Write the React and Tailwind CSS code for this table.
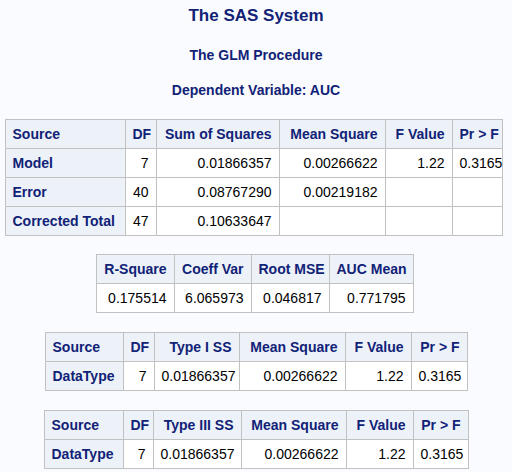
const HEAD = 'border border-[#c1c1c1] bg-[#edf2f9] text-[#112277] font-bold px-[7px] py-[6px] leading-[16px] whitespace-nowrap'
const CELL = 'border border-[#c1c1c1] bg-white text-black px-[7px] py-[6px] leading-[16px] whitespace-nowrap text-right'

function SasTable({ cols, head, rows, rowHeader = true, className = '' }) {
  const total = cols.reduce((s, c) => s + c, 0)
  return (
    <div className={`flex justify-center ${className}`}>
      <table className="table-fixed border-collapse text-[14px]" style={{ width: total }}>
        <colgroup>
          {cols.map((w, i) => <col key={i} style={{ width: w }} />)}
        </colgroup>
        <thead>
          <tr>
            {head.map((h, i) => (
              <th key={h} scope="col" className={`${HEAD} ${rowHeader && i === 0 ? 'text-left' : 'text-right'}`}>{h}</th>
            ))}
          </tr>
        </thead>
        <tbody>
          {rows.map((r) => (
            <tr key={r[0]}>
              {r.map((v, i) =>
                rowHeader && i === 0
                  ? <th key={i} scope="row" className={`${HEAD} text-left`}>{v}</th>
                  : <td key={i} className={CELL}>{v}</td>
              )}
            </tr>
          ))}
        </tbody>
      </table>
    </div>
  )
}

export default function App() {
  return (
    <div className="min-h-screen bg-[#fafbfe] pt-[6px]" style={{ fontFamily: '"Liberation Sans", Arial, sans-serif' }}>
      <h1 className="text-center text-[17px] leading-[20px] font-bold text-[#112277]">The SAS System</h1>
      <h2 className="mt-[21px] text-center text-[14px] leading-[17px] font-bold text-[#112277]">The GLM Procedure</h2>
      <h3 className="mt-[18px] text-center text-[14px] leading-[17px] font-bold text-[#112277]">Dependent Variable: AUC</h3>

      <SasTable
        className="mt-[20px] pr-[5px]"
        cols={[120, 31, 123, 106, 67, 50]}
        head={['Source', 'DF', 'Sum of Squares', 'Mean Square', 'F Value', 'Pr > F']}
        rows={[
          ['Model', '7', '0.01866357', '0.00266622', '1.22', '0.3165'],
          ['Error', '40', '0.08767290', '0.00219182', '', ''],
          ['Corrected Total', '47', '0.10633647', '', '', ''],
        ]}
      />

      <SasTable
        className="mt-[18px] pr-[3px]"
        rowHeader={false}
        cols={[78, 77, 78, 84]}
        head={['R-Square', 'Coeff Var', 'Root MSE', 'AUC Mean']}
        rows={[['0.175514', '6.065973', '0.046817', '0.771795']]}
      />

      <SasTable
        className="mt-[19px]"
        cols={[78, 31, 85, 106, 66, 56]}
        head={['Source', 'DF', 'Type I SS', 'Mean Square', 'F Value', 'Pr > F']}
        rows={[['DataType', '7', '0.01866357', '0.00266622', '1.22', '0.3165']]}
      />

      <SasTable
        className="mt-[19px]"
        cols={[79, 30, 88, 105, 67, 55]}
        head={['Source', 'DF', 'Type III SS', 'Mean Square', 'F Value', 'Pr > F']}
        rows={[['DataType', '7', '0.01866357', '0.00266622', '1.22', '0.3165']]}
      />
    </div>
  )
}
